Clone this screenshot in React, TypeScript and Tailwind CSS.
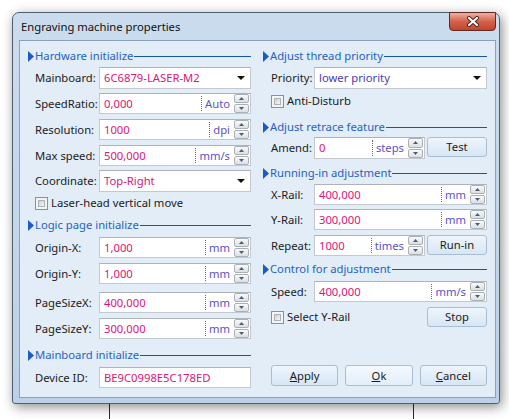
import React from "react";

const ff = "font-['Noto_Sans',sans-serif]";

function Tri() {
  return (
    <svg width="6" height="11" viewBox="0 0 6 11" className="shrink-0">
      <path d="M0 0L6 5.5L0 11Z" fill="#1a5cc6" />
    </svg>
  );
}

function Header({ title, cls = "" }: { title: string; cls?: string }) {
  return (
    <div className={`flex items-center h-[14px] ${cls}`}>
      <Tri />
      <span className="ml-[1px] leading-none whitespace-nowrap text-[#1f62c4]">{title}</span>
      <div className="ml-[1px] flex-1 h-px bg-[#1a54a5]" />
    </div>
  );
}

function SpinBtn({ up }: { up?: boolean }) {
  return (
    <div className="flex-1 flex items-center justify-center border border-[#a9b0b8] rounded-[2px] bg-gradient-to-b from-[#fafafa] to-[#dcdfe3]">
      <svg width="5" height="3" viewBox="0 0 5 3">
        <path d={up ? "M0 3L2.5 0L5 3Z" : "M0 0L2.5 3L5 0Z"} fill="#4c5d72" />
      </svg>
    </div>
  );
}

function Spinner() {
  return (
    <div className="flex flex-col gap-px w-[15px] mr-px shrink-0">
      <SpinBtn up />
      <SpinBtn />
    </div>
  );
}

function Field({ value, unit, cls = "flex-1" }: { value: string; unit: string; cls?: string }) {
  return (
    <div className={`flex h-[21px] bg-white border border-[#c4c9d0] border-t-[#aeb3ba] ${cls}`}>
      <div className="flex-1 flex items-center pl-[4px] text-[#dc1578] whitespace-nowrap overflow-hidden">{value}</div>
      <div className="my-[2px] flex items-center border-l border-dotted border-[#6a5ec4] pl-[3px] pr-[4px] text-[#5d52c6] whitespace-nowrap">
        {unit}
      </div>
      <Spinner />
    </div>
  );
}

function Combo({ value, color }: { value: string; color: string }) {
  return (
    <div className="flex-1 flex items-center h-[22px] bg-white border border-[#c4c9d0] border-t-[#aeb3ba] pl-[4px] pr-[5px]">
      <span className={`flex-1 whitespace-nowrap ${color}`}>{value}</span>
      <svg width="8" height="4" viewBox="0 0 8 4">
        <path d="M0 0L4 4L8 0Z" fill="#111" />
      </svg>
    </div>
  );
}

function Check() {
  return (
    <div className="w-[13px] h-[13px] border border-[#8e8f8f] bg-[#f4f4f4] p-[2px] shrink-0">
      <div className="w-full h-full border border-[#aeb1b5] bg-gradient-to-br from-[#cdcfd2] to-[#f6f6f6]" />
    </div>
  );
}

function Btn({ children, cls = "" }: { children: React.ReactNode; cls?: string }) {
  return (
    <div
      className={`flex items-center justify-center border border-[#a9bdd3] rounded-[3px] bg-gradient-to-b from-[#eef5fc] to-[#d6e6f5] text-[#1b1b1b] ${cls}`}
    >
      {children}
    </div>
  );
}

function LRow({ label, cls = "", children }: { label: string; cls?: string; children: React.ReactNode }) {
  return (
    <div className={`flex items-center ${cls}`}>
      <div className="w-[71px] pl-[7px] shrink-0 whitespace-nowrap text-[#1b1b1b]">{label}</div>
      {children}
    </div>
  );
}

function RRow({ label, cls = "", children }: { label: string; cls?: string; children: React.ReactNode }) {
  return (
    <div className={`flex items-center ${cls}`}>
      <div className="w-[51px] pl-[8px] shrink-0 whitespace-nowrap text-[#1b1b1b]">{label}</div>
      {children}
    </div>
  );
}

export default function App() {
  return (
    <div className={`relative w-[509px] h-[419px] bg-white overflow-hidden pt-[12px] pl-[12px] text-[11.25px] leading-none ${ff}`}>
      <div className="absolute left-[109px] top-[400px] w-px h-[19px] bg-[#2a2a2a]" />
      <div className="absolute left-[413px] top-[400px] w-px h-[19px] bg-[#2a2a2a]" />
      <div className="relative w-[488px] h-[392px] rounded-t-[7px] rounded-b-[3px] border border-[#4f5e72] bg-gradient-to-b from-[#cbdcee] to-[#bcd1e7] shadow-[2px_3px_12px_rgba(0,0,0,0.45)] flex flex-col">
        <div className="h-[27px] flex items-start shrink-0">
          <div className="pl-[8px] pt-[8px] text-[#111] whitespace-nowrap">Engraving machine properties</div>
          <div className="flex-1" />
          <div className="mt-[-1px] mr-[3px] w-[47px] h-[19px] border border-[#5e2a22] rounded-b-[4px] bg-gradient-to-b from-[#eab0a4] via-[#d4614c] to-[#c2452c] flex items-center justify-center">
            <svg width="14" height="11" viewBox="0 0 14 11">
              <path d="M3 2L11 9M11 2L3 9" stroke="#4a2019" strokeWidth="4" strokeLinecap="round" />
              <path d="M3 2L11 9M11 2L3 9" stroke="#ffffff" strokeWidth="2.2" strokeLinecap="round" />
            </svg>
          </div>
        </div>
        <div className="ml-[6px] mr-[3px] mb-[5px] flex-1 border border-[#8aa1bb] bg-[#e2edf8] flex px-[8px] gap-[12px]">
          {/* Left column */}
          <div className="w-[223px] flex flex-col pt-[8px]">
            <Header title="Hardware initialize" />
            <LRow label="Mainboard:" cls="mt-[4px]">
              <Combo value="6C6879-LASER-M2" color="text-[#dc1578]" />
            </LRow>
            <LRow label="SpeedRatio:" cls="mt-[4px]">
              <Field value="0,000" unit="Auto" />
            </LRow>
            <LRow label="Resolution:" cls="mt-[5px]">
              <Field value="1000" unit="dpi" />
            </LRow>
            <LRow label="Max speed:" cls="mt-[5px]">
              <Field value="500,000" unit="mm/s" />
            </LRow>
            <LRow label="Coordinate:" cls="mt-[4px]">
              <Combo value="Top-Right" color="text-[#dc1578]" />
            </LRow>
            <div className="mt-[4px] h-[14px] flex items-center pl-[7px] gap-[3px]">
              <Check />
              <span className="text-[#1b1b1b] whitespace-nowrap">Laser-head vertical move</span>
            </div>
            <Header title="Logic page initialize" cls="mt-[8px]" />
            <LRow label="Origin-X:" cls="mt-[5px]">
              <Field value="1,000" unit="mm" />
            </LRow>
            <LRow label="Origin-Y:" cls="mt-[5px]">
              <Field value="1,000" unit="mm" />
            </LRow>
            <LRow label="PageSizeX:" cls="mt-[8px]">
              <Field value="400,000" unit="mm" />
            </LRow>
            <LRow label="PageSizeY:" cls="mt-[5px]">
              <Field value="300,000" unit="mm" />
            </LRow>
            <Header title="Mainboard initialize" cls="mt-[9px]" />
            <LRow label="Device ID:" cls="mt-[5px]">
              <div className="flex-1 flex items-center h-[21px] bg-white border border-[#c4c9d0] border-t-[#aeb3ba] pl-[4px] text-[#dc1578]">
                BE9C0998E5C178ED
              </div>
            </LRow>
          </div>
          {/* Right column */}
          <div className="w-[224px] flex flex-col pt-[8px]">
            <Header title="Adjust thread priority" />
            <RRow label="Priority:" cls="mt-[4px]">
              <Combo value="lower priority" color="text-[#4b3cb4]" />
            </RRow>
            <div className="mt-[5px] h-[14px] flex items-center pl-[8px] gap-[3px]">
              <Check />
              <span className="text-[#1b1b1b] whitespace-nowrap">Anti-Disturb</span>
            </div>
            <Header title="Adjust retrace feature" cls="mt-[12px]" />
            <RRow label="Amend:" cls="mt-[3px]">
              <Field value="0" unit="steps" cls="w-[111px] h-[22px]" />
              <Btn cls="ml-[2px] w-[60px] h-[20px] self-start">Test</Btn>
            </RRow>
            <Header title="Running-in adjustment" cls="mt-[7px]" />
            <RRow label="X-Rail:" cls="mt-[4px]">
              <Field value="400,000" unit="mm" />
            </RRow>
            <RRow label="Y-Rail:" cls="mt-[4px]">
              <Field value="300,000" unit="mm" />
            </RRow>
            <RRow label="Repeat:" cls="mt-[5px]">
              <Field value="1000" unit="times" cls="w-[111px]" />
              <Btn cls="ml-[2px] w-[60px] h-[20px] self-start">Run-in</Btn>
            </RRow>
            <Header title="Control for adjustment" cls="mt-[6px]" />
            <RRow label="Speed:" cls="mt-[5px]">
              <Field value="400,000" unit="mm/s" />
            </RRow>
            <div className="mt-[5px] h-[20px] flex items-center pl-[8px]">
              <Check />
              <span className="ml-[3px] text-[#1b1b1b] whitespace-nowrap">Select Y-Rail</span>
              <div className="flex-1" />
              <Btn cls="w-[60px] h-[20px]">Stop</Btn>
            </div>
            <div className="mt-[38px] pl-[8px] flex gap-[7px] h-[21px]">
              <Btn cls="flex-1">
                <span>
                  <span className="underline">A</span>pply
                </span>
              </Btn>
              <Btn cls="flex-1 from-[#f4f9fe] to-[#e2eef9]">
                <span>
                  <span className="underline">O</span>k
                </span>
              </Btn>
              <Btn cls="flex-1">
                <span>
                  <span className="underline">C</span>ancel
                </span>
              </Btn>
            </div>
          </div>
        </div>
      </div>
    </div>
  );
}
